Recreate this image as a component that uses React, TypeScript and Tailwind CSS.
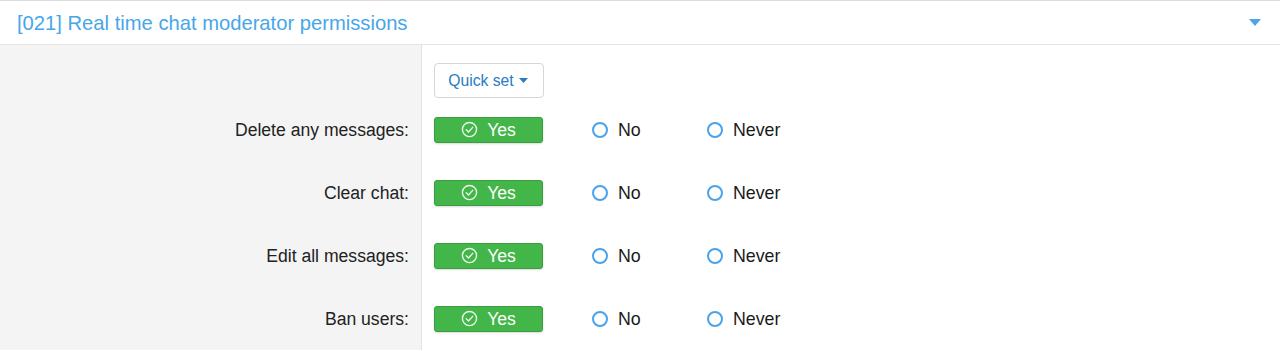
import React from "react";

const rows = ["Delete any messages:", "Clear chat:", "Edit all messages:", "Ban users:"];

function CheckCircle() {
  return (
    <svg width="17" height="17" viewBox="0 0 24 24" fill="none" stroke="#eaf7ea" strokeWidth="2" strokeLinecap="round" strokeLinejoin="round">
      <circle cx="12" cy="12" r="10" />
      <path d="M7.5 12.5l3 3 6-6.5" />
    </svg>
  );
}

function Radio({ label }: { label: string }) {
  return (
    <div className="flex items-center">
      <span className="w-[16px] h-[16px] rounded-full border-[2px] border-[#4aa3ea] bg-white mt-[1px]" />
      <span className="ml-[10px] text-[17.8px] text-[#1a1a1a] pt-[2px]">{label}</span>
    </div>
  );
}

export default function App() {
  return (
    <div className="w-[1280px] h-[351px] bg-white overflow-hidden" style={{ fontFamily: '"Liberation Sans", Arial, sans-serif' }}>
      <div className="h-[45px] border-t border-b border-t-[#dcdcdc] border-b-[#e4e4e4] flex items-center justify-between pl-[17px] pr-[19px]">
        <span className="text-[20.2px] text-[#47a6e9] pt-[1px]">[021] Real time chat moderator permissions</span>
        <svg width="12" height="7" viewBox="0 0 12 7"><path d="M0 0h12L6 7z" fill="#4aa5ea" /></svg>
      </div>
      <div className="flex h-[53px]">
        <div className="w-[422px] bg-[#f4f4f4] border-r border-[#e2e2e2]" />
        <div className="flex-1 pl-[12px] pt-[18px]">
          <button className="h-[35px] w-[110px] rounded-[4px] border border-[#d6d6d6] bg-white flex items-center justify-center gap-[5px] text-[15.7px] text-[#2a7cbf] pr-[2px]">
            <span className="pt-[1px]">Quick set</span>
            <svg width="9" height="5" viewBox="0 0 9 5"><path d="M0 0h9L4.5 5z" fill="#2a7cbf" /></svg>
          </button>
        </div>
      </div>
      {rows.map((r) => (
        <div key={r} className="flex h-[63px]">
          <div className="w-[422px] bg-[#f4f4f4] border-r border-[#e2e2e2] flex items-center justify-end pr-[12px] pt-[2px] text-[17.6px] text-[#222]">
            {r}
          </div>
          <div className="flex-1 pl-[12px] flex items-center">
            <div className="w-[109px] h-[26px] rounded-[3px] bg-[#43b649] border border-[#3a9d40] shadow-[0_1px_2px_rgba(0,0,0,0.15)] flex items-center justify-center gap-[9px] text-white text-[17.6px]">
              <CheckCircle />
              <span className="pt-[1px]">Yes</span>
            </div>
            <div className="ml-[49px] w-[115px]">
              <Radio label="No" />
            </div>
            <Radio label="Never" />
          </div>
        </div>
      ))}
    </div>
  );
}
